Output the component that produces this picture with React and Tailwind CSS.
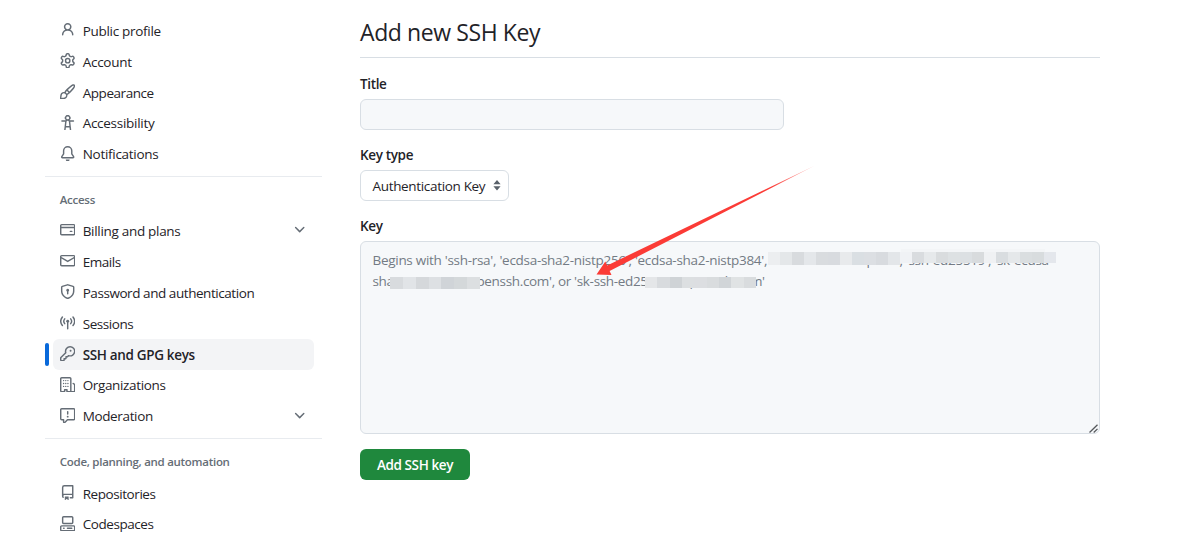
const ICONS = {
  person: 'M10.561 8.073a6.005 6.005 0 0 1 3.432 5.142.75.75 0 1 1-1.498.07 4.5 4.5 0 0 0-8.99 0 .75.75 0 0 1-1.498-.07 6.004 6.004 0 0 1 3.431-5.142 3.999 3.999 0 1 1 5.123 0ZM10.5 5a2.5 2.5 0 1 0-5 0 2.5 2.5 0 0 0 5 0Z',
  gear: 'M8 0a8.2 8.2 0 0 1 .701.031C9.444.095 9.99.645 10.16 1.29l.288 1.107c.018.066.079.158.212.224.231.114.454.243.668.386.123.082.233.09.299.071l1.103-.303c.644-.176 1.392.021 1.82.63.27.385.506.792.704 1.218.315.675.111 1.422-.364 1.891l-.814.806c-.049.048-.098.147-.088.294.016.257.016.515 0 .772-.01.147.038.246.088.294l.814.806c.475.469.679 1.216.364 1.891a7.977 7.977 0 0 1-.704 1.217c-.428.61-1.176.807-1.82.63l-1.102-.302c-.067-.019-.177-.011-.3.071a5.909 5.909 0 0 1-.668.386c-.133.066-.194.158-.211.224l-.29 1.106c-.168.646-.715 1.196-1.458 1.26a8.006 8.006 0 0 1-1.402 0c-.743-.064-1.289-.614-1.458-1.26l-.289-1.106c-.018-.066-.079-.158-.212-.224a5.738 5.738 0 0 1-.668-.386c-.123-.082-.233-.09-.299-.071l-1.103.303c-.644.176-1.392-.021-1.82-.63a8.12 8.12 0 0 1-.704-1.218c-.315-.675-.111-1.422.363-1.891l.815-.806c.05-.048.098-.147.088-.294a6.214 6.214 0 0 1 0-.772c.01-.147-.038-.246-.088-.294l-.815-.806C.635 6.045.431 5.298.746 4.623a7.92 7.92 0 0 1 .704-1.217c.428-.61 1.176-.807 1.82-.63l1.102.302c.067.019.177.011.3-.071.214-.143.437-.272.668-.386.133-.066.194-.158.211-.224l.29-1.106C6.009.645 6.556.095 7.299.03 7.53.01 7.764 0 8 0Zm-.571 1.525c-.036.003-.108.036-.137.146l-.289 1.105c-.147.561-.549.967-.998 1.189-.173.086-.34.183-.5.29-.417.278-.97.423-1.529.27l-1.103-.303c-.109-.03-.175.016-.195.045-.22.312-.412.644-.573.99-.014.031-.021.11.059.19l.815.806c.411.406.562.957.53 1.456a4.709 4.709 0 0 0 0 .582c.032.499-.119 1.05-.53 1.456l-.815.806c-.081.08-.073.159-.059.19.162.346.353.677.573.989.02.03.085.076.195.046l1.102-.303c.56-.153 1.113-.008 1.53.27.161.107.328.204.501.29.447.222.85.629.997 1.189l.289 1.105c.029.109.101.143.137.146a6.6 6.6 0 0 0 1.142 0c.036-.003.108-.036.137-.146l.289-1.105c.147-.561.549-.967.998-1.189.173-.086.34-.183.5-.29.417-.278.97-.423 1.529-.27l1.103.303c.109.029.175-.016.195-.045.22-.313.411-.644.573-.99.014-.031.021-.11-.059-.19l-.815-.806c-.411-.406-.562-.957-.53-1.456a4.709 4.709 0 0 0 0-.582c-.032-.499.119-1.05.53-1.456l.815-.806c.081-.08.073-.159.059-.19a6.464 6.464 0 0 0-.573-.989c-.02-.03-.085-.076-.195-.046l-1.102.303c-.56.153-1.113.008-1.53-.27a4.44 4.44 0 0 0-.501-.29c-.447-.222-.85-.629-.997-1.189l-.289-1.105c-.029-.11-.101-.143-.137-.146a6.6 6.6 0 0 0-1.142 0ZM11 8a3 3 0 1 1-6 0 3 3 0 0 1 6 0ZM9.5 8a1.5 1.5 0 1 0-3.001.001A1.5 1.5 0 0 0 9.5 8Z',
  paintbrush: 'M11.134 1.535c.7-.509 1.416-.942 2.076-1.155.649-.21 1.463-.267 2.069.34.603.601.568 1.411.368 2.07-.202.668-.624 1.39-1.125 2.096-1.011 1.424-2.496 2.987-3.775 4.249-1.098 1.084-2.132 1.839-3.04 2.3a3.744 3.744 0 0 1-1.055 3.217c-.431.431-1.065.691-1.657.861-.614.177-1.294.287-1.914.357A21.151 21.151 0 0 1 .797 16H.743a.75.75 0 0 1-.743-.742v-.054a21.25 21.25 0 0 1 .13-2.284c.067-.647.187-1.287.358-1.914.17-.591.43-1.226.86-1.657a3.746 3.746 0 0 1 3.227-1.054c.466-.893 1.225-1.907 2.314-2.982 1.271-1.255 2.833-2.75 4.245-3.777ZM1.62 13.089c-.051.464-.086.929-.104 1.395.466-.018.932-.053 1.396-.104a10.511 10.511 0 0 0 1.668-.309c.526-.151.856-.325 1.011-.48a2.25 2.25 0 1 0-3.182-3.182c-.155.155-.329.485-.48 1.01a10.515 10.515 0 0 0-.309 1.67Zm10.396-10.34c-1.224.89-2.605 2.189-3.822 3.384l1.718 1.718c1.21-1.205 2.51-2.597 3.387-3.833.47-.662.78-1.227.912-1.662.134-.444.032-.551.009-.575h-.001V1.78c-.014-.014-.113-.113-.548.027-.432.14-.995.462-1.655.942Zm-4.832 7.266-.001.001a9.859 9.859 0 0 0 1.63-1.142L7.155 7.216a9.7 9.7 0 0 0-1.161 1.607c.482.302.889.71 1.19 1.192Z',
  accessibility: 'M9.923 5.302c.063.063.122.129.178.198H14A.75.75 0 0 1 14 7h-3.3l.578 5.163.362 2.997a.75.75 0 0 1-1.49.18L9.868 13H6.132l-.282 2.34a.75.75 0 0 1-1.49-.18l.362-2.997L5.3 7H2a.75.75 0 0 1 0-1.5h3.9a2.54 2.54 0 0 1 .176-.198 3 3 0 1 1 3.847 0ZM9.2 7.073h-.001a1.206 1.206 0 0 0-2.398 0L6.305 11.5h3.39ZM9.5 3a1.5 1.5 0 1 0-3.001.001A1.5 1.5 0 0 0 9.5 3Z',
  bell: 'M8 16a2 2 0 0 0 1.985-1.75c.017-.137-.097-.25-.235-.25h-3.5c-.138 0-.252.113-.235.25A2 2 0 0 0 8 16ZM3 5a5 5 0 0 1 10 0v2.947c0 .05.015.098.042.139l1.703 2.555A1.519 1.519 0 0 1 13.482 13H2.518a1.516 1.516 0 0 1-1.263-2.36l1.703-2.554A.255.255 0 0 0 3 7.947Zm5-3.5A3.5 3.5 0 0 0 4.5 5v2.947c0 .346-.102.683-.294.97l-1.703 2.556a.017.017 0 0 0-.003.01l.001.006c0 .002.002.004.004.006l.006.004.007.001h10.964l.007-.001.006-.004.004-.006.001-.007a.017.017 0 0 0-.003-.01l-1.703-2.554a1.745 1.745 0 0 1-.294-.97V5A3.5 3.5 0 0 0 8 1.5Z',
  card: 'M10.75 9a.75.75 0 0 0 0 1.5h1.5a.75.75 0 0 0 0-1.5h-1.5ZM0 3.75C0 2.784.784 2 1.75 2h12.5c.966 0 1.75.784 1.75 1.75v8.5A1.75 1.75 0 0 1 14.25 14H1.75A1.75 1.75 0 0 1 0 12.25ZM14.5 6.5h-13v5.75c0 .138.112.25.25.25h12.5a.25.25 0 0 0 .25-.25Zm0-2.75a.25.25 0 0 0-.25-.25H1.75a.25.25 0 0 0-.25.25V5h13Z',
  mail: 'M1.75 2h12.5c.966 0 1.75.784 1.75 1.75v8.5A1.75 1.75 0 0 1 14.25 14H1.75A1.75 1.75 0 0 1 0 12.25v-8.5C0 2.784.784 2 1.75 2ZM1.5 12.251c0 .138.112.25.25.25h12.5a.25.25 0 0 0 .25-.25V5.809L8.38 9.397a.75.75 0 0 1-.76 0L1.5 5.809v6.442Zm13-8.181v-.32a.25.25 0 0 0-.25-.25H1.75a.25.25 0 0 0-.25.25v.32L8 7.88Z',
  shield: 'm8.533.133 5.25 1.68A1.75 1.75 0 0 1 15 3.48V7c0 1.566-.32 3.182-1.303 4.682-.983 1.498-2.585 2.813-5.032 3.855a1.697 1.697 0 0 1-1.33 0c-2.447-1.042-4.049-2.357-5.032-3.855C1.32 10.182 1 8.566 1 7V3.48a1.75 1.75 0 0 1 1.217-1.667l5.25-1.68a1.748 1.748 0 0 1 1.066 0Zm-.61 1.429.001.001-5.25 1.68a.251.251 0 0 0-.174.237V7c0 1.36.275 2.666 1.057 3.859.784 1.194 2.121 2.342 4.366 3.298a.196.196 0 0 0 .154 0c2.245-.957 3.582-2.103 4.366-3.297C13.225 9.666 13.5 8.358 13.5 7V3.48a.25.25 0 0 0-.174-.238l-5.25-1.68a.25.25 0 0 0-.153 0ZM9.5 6.5c0 .536-.286 1.032-.75 1.3v2.45a.75.75 0 0 1-1.5 0V7.8A1.5 1.5 0 1 1 9.5 6.5Z',
  key: 'M10.5 0a5.499 5.499 0 1 1-1.288 10.848l-.932.932a.749.749 0 0 1-.53.22H7v.75a.749.749 0 0 1-.22.53l-.5.5a.749.749 0 0 1-.53.22H5v.75a.749.749 0 0 1-.22.53l-.5.5a.749.749 0 0 1-.53.22h-2A1.75 1.75 0 0 1 0 14.25v-2c0-.199.079-.389.22-.53l4.932-4.932A5.5 5.5 0 0 1 10.5 0Zm-4 5.5c-.001.431.069.86.205 1.269a.75.75 0 0 1-.181.768L1.5 12.56v1.69c0 .138.112.25.25.25h1.69l.06-.06v-1.19a.75.75 0 0 1 .75-.75h1.19l.06-.06v-1.19a.75.75 0 0 1 .75-.75h1.19l1.023-1.025a.75.75 0 0 1 .768-.18A4 4 0 1 0 6.5 5.5ZM11 6a1 1 0 1 1 0-2 1 1 0 0 1 0 2Z',
  organization: 'M1.75 16A1.75 1.75 0 0 1 0 14.25V1.75C0 .784.784 0 1.75 0h8.5C11.216 0 12 .784 12 1.75v12.5c0 .085-.006.168-.018.25h2.268a.25.25 0 0 0 .25-.25V8.285a.25.25 0 0 0-.111-.208l-1.055-.703a.749.749 0 1 1 .832-1.248l1.055.703c.487.325.779.871.779 1.456v5.965A1.75 1.75 0 0 1 14.25 16h-3.5a.766.766 0 0 1-.197-.026c-.099.017-.2.026-.303.026h-3a.75.75 0 0 1-.75-.75V14h-1v1.25a.75.75 0 0 1-.75.75Zm-.25-1.75c0 .138.112.25.25.25H4v-1.25a.75.75 0 0 1 .75-.75h2.5a.75.75 0 0 1 .75.75v1.25h2.25a.25.25 0 0 0 .25-.25V1.75a.25.25 0 0 0-.25-.25h-8.5a.25.25 0 0 0-.25.25ZM3.75 3a.75.75 0 1 0 0 1.5.75.75 0 0 0 0-1.5Zm0 3a.75.75 0 1 0 0 1.5.75.75 0 0 0 0-1.5Zm0 3a.75.75 0 1 0 0 1.5.75.75 0 0 0 0-1.5ZM6 3a.75.75 0 1 0 0 1.5A.75.75 0 0 0 6 3Zm0 3a.75.75 0 1 0 0 1.5A.75.75 0 0 0 6 6Zm0 3a.75.75 0 1 0 0 1.5A.75.75 0 0 0 6 9Zm2.25-6a.75.75 0 1 0 0 1.5.75.75 0 0 0 0-1.5Zm0 3a.75.75 0 1 0 0 1.5.75.75 0 0 0 0-1.5Zm0 3a.75.75 0 1 0 0 1.5.75.75 0 0 0 0-1.5Z',
  report: 'M0 1.75C0 .784.784 0 1.75 0h12.5C15.216 0 16 .784 16 1.75v9.5A1.75 1.75 0 0 1 14.25 13H8.06l-2.573 2.573A1.458 1.458 0 0 1 3 14.543V13H1.75A1.75 1.75 0 0 1 0 11.25Zm1.75-.25a.25.25 0 0 0-.25.25v9.5c0 .138.112.25.25.25h2a.75.75 0 0 1 .75.75v2.19l2.72-2.72a.749.749 0 0 1 .53-.22h6.5a.25.25 0 0 0 .25-.25v-9.5a.25.25 0 0 0-.25-.25Zm7 2.25v2.5a.75.75 0 0 1-1.5 0v-2.5a.75.75 0 0 1 1.5 0ZM9 9a1 1 0 1 1-2 0 1 1 0 0 1 2 0Z',
  repo: 'M2 2.5A2.5 2.5 0 0 1 4.5 0h8.75a.75.75 0 0 1 .75.75v12.5a.75.75 0 0 1-.75.75h-2.5a.75.75 0 0 1 0-1.5h1.75v-2h-8a1 1 0 0 0-.714 1.7.75.75 0 1 1-1.072 1.05A2.495 2.495 0 0 1 2 11.5Zm10.5-1h-8a1 1 0 0 0-1 1v6.708A2.486 2.486 0 0 1 4.5 9h8ZM5 12.25a.25.25 0 0 1 .25-.25h3.5a.25.25 0 0 1 .25.25v3.25a.25.25 0 0 1-.4.2l-1.45-1.087a.249.249 0 0 0-.3 0L5.4 15.7a.25.25 0 0 1-.4-.2Z',
  codespaces: 'M0 11.25c0-.966.784-1.75 1.75-1.75h12.5c.966 0 1.75.784 1.75 1.75v3A1.75 1.75 0 0 1 14.25 16H1.75A1.75 1.75 0 0 1 0 14.25Zm2-9.5C2 .784 2.784 0 3.75 0h8.5C13.216 0 14 .784 14 1.75v5a1.75 1.75 0 0 1-1.75 1.75h-8.5A1.75 1.75 0 0 1 2 6.75Zm1.75-.25a.25.25 0 0 0-.25.25v5c0 .138.112.25.25.25h8.5a.25.25 0 0 0 .25-.25v-5a.25.25 0 0 0-.25-.25Zm-2 9.5a.25.25 0 0 0-.25.25v3c0 .138.112.25.25.25h12.5a.25.25 0 0 0 .25-.25v-3a.25.25 0 0 0-.25-.25ZM7 12.75a.75.75 0 0 1 .75-.75h4.5a.75.75 0 0 1 0 1.5h-4.5a.75.75 0 0 1-.75-.75Zm-4 0a.75.75 0 0 1 .75-.75h.5a.75.75 0 0 1 0 1.5h-.5a.75.75 0 0 1-.75-.75Z',
  chevron: 'M12.78 5.22a.749.749 0 0 1 0 1.06l-4.25 4.25a.749.749 0 0 1-1.06 0L3.22 6.28a.749.749 0 1 1 1.06-1.06L8 8.939l3.72-3.719a.749.749 0 0 1 1.06 0Z',
};

function Icon({ name }) {
  if (name === 'broadcast') {
    return (
      <svg viewBox="0 0 16 16" className="size-[15.4px] shrink-0" fill="none" stroke="#656d76" strokeWidth="1.5" strokeLinecap="round">
        <path d="M2.5 2.1a7 7 0 0 0 0 8.8M13.5 2.1a7 7 0 0 1 0 8.8M4.9 4a4 4 0 0 0 0 5M11.1 4a4 4 0 0 1 0 5M8 7.5v6.7" />
        <circle cx="8" cy="6.5" r="1.5" fill="#656d76" stroke="none" />
      </svg>
    );
  }
  return (
    <svg viewBox="0 0 16 16" className="size-[15.4px] shrink-0" fill="#656d76">
      <path fillRule={name === 'organization' ? 'evenodd' : 'nonzero'} d={ICONS[name]} />
    </svg>
  );
}

function Item({ icon, label, track, expandable, active }) {
  return (
    <li className="relative h-[30.85px] px-[7.7px]">
      {active && <span className="absolute top-[3.8px] left-0 h-[23.2px] w-[4px] rounded-[3px] bg-[#0969da]" />}
      <a className={`flex h-full items-center rounded-[6px] px-[7.3px] ${active ? 'bg-[#f3f4f6] font-semibold' : ''}`}>
        <span className="-mt-[2px] flex">
          <Icon name={icon} />
        </span>
        <span className={`ml-[7.3px] flex-1 whitespace-nowrap ${track}`}>{label}</span>
        {expandable && (
          <span className="-mt-[2px] flex">
            <Icon name="chevron" />
          </span>
        )}
      </a>
    </li>
  );
}

const personal = [
  { icon: 'person', label: 'Public profile', track: 'tracking-[-0.29px]' },
  { icon: 'gear', label: 'Account', track: 'tracking-[-0.26px]' },
  { icon: 'paintbrush', label: 'Appearance', track: 'tracking-[-0.44px]' },
  { icon: 'accessibility', label: 'Accessibility', track: 'tracking-[-0.28px]' },
  { icon: 'bell', label: 'Notifications', track: 'tracking-[-0.29px]' },
];
const access = [
  { icon: 'card', label: 'Billing and plans', track: 'tracking-[-0.3px]', expandable: true },
  { icon: 'mail', label: 'Emails', track: 'tracking-[-0.45px]' },
  { icon: 'shield', label: 'Password and authentication', track: 'tracking-[-0.44px]' },
  { icon: 'broadcast', label: 'Sessions', track: 'tracking-[-0.43px]' },
  { icon: 'key', label: 'SSH and GPG keys', track: 'tracking-[-0.34px]', active: true },
  { icon: 'organization', label: 'Organizations', track: 'tracking-[-0.35px]' },
  { icon: 'report', label: 'Moderation', track: 'tracking-[-0.36px]', expandable: true },
];
const code = [
  { icon: 'repo', label: 'Repositories', track: 'tracking-[-0.43px]' },
  { icon: 'codespaces', label: 'Codespaces', track: 'tracking-[-0.43px]' },
];

function Group({ items }) {
  return (
    <ul>
      {items.map((item) => (
        <Item key={item.label} {...item} />
      ))}
    </ul>
  );
}

function Heading({ children }) {
  return <h3 className="h-[31px] pl-[14.8px] text-[11.5px] leading-[30px] font-semibold tracking-[-0.28px] text-[#656d76]">{children}</h3>;
}

function Mosaic({ className, cells }) {
  return (
    <div className={`absolute flex ${className}`}>
      {cells.map((c, i) => (
        <span key={i} className="h-full flex-1" style={{ backgroundColor: c }} />
      ))}
    </div>
  );
}

export default function App() {
  return (
    <div className="flex h-[540px] w-[1201px] overflow-hidden bg-white font-['Open_Sans','Noto_Sans',sans-serif] text-[13.5px] leading-[20px] text-[#1f2328]">
      <nav className="ml-[45px] w-[277px] shrink-0 pt-[15.5px]">
        <div className="w-full">
          <Group items={personal} />
          <hr className="mt-[6.5px] mb-[7.5px] border-[#d8dee4]/60" />
          <Heading>Access</Heading>
          <Group items={access} />
          <hr className="mt-[6.5px] mb-[8px] border-[#d8dee4]/60" />
          <Heading>Code, planning, and automation</Heading>
          <Group items={code} />
        </div>
      </nav>
      <main className="ml-[38px] w-[740px] shrink-0 pt-[16px]">
        <h1 className="h-[42px] border-b border-[#d8dee4] text-[23px] leading-[33px] tracking-[-0.4px]">Add new SSH Key</h1>
        <div className="mt-[16px] font-semibold tracking-[-0.35px]">Title</div>
        <div className="mt-[5px] h-[31px] w-[424px] rounded-[6px] border border-[#d8dee4] bg-[#f6f8fa]" />
        <div className="mt-[15px] font-semibold tracking-[-0.35px]">Key type</div>
        <div className="mt-[5px] flex h-[31px] w-[149px] items-center justify-between rounded-[6px] border border-[#d8dee4] pr-[7px] pl-[11.5px]">
          <span className="whitespace-nowrap tracking-[-0.33px]">Authentication Key</span>
          <svg viewBox="0 0 8 11" className="h-[11px] w-[8px]" fill="#59616a">
            <path d="M4 0 7.6 4.3H.4ZM.4 6.2h7.2L4 10.5Z" />
          </svg>
        </div>
        <div className="mt-[15px] font-semibold tracking-[-0.35px]">Key</div>
        <div className="relative mt-[5px] h-[193px] rounded-[6px] border border-[#d8dee4] bg-[#f6f8fa] px-[11.5px] pt-[7.5px] leading-[21px] text-[#737b84]">
          <p className="whitespace-nowrap tracking-[-0.29px]">Begins with 'ssh-rsa', 'ecdsa-sha2-nistp256', 'ecdsa-sha2-nistp384', 'ecdsa-sha2-nistp521', 'ssh-ed25519', 'sk-ecdsa-</p>
          <p className="whitespace-nowrap tracking-[-0.33px]">sha2-nistp256@openssh.com', or 'sk-ssh-ed25519@openssh.com'</p>
          <div className="absolute top-[7px] left-[540px] h-[4px] w-[144px] bg-[#f3f5f7]" />
          <Mosaic className="top-[10px] left-[407px] h-[13px] w-[132px]" cells={['#eceef0', '#e4e7e9', '#d8dbde', '#e4e7ea', '#d9dcdf', '#d8dbdf', '#e8eaec', '#dadfe3', '#dcdfe3', '#d8dbdf', '#e3e6e9']} />
          <Mosaic className="top-[10px] left-[539px] h-[11px] w-[156px]" cells={['#f0f2f5', '#d9dcdf', '#e6e9eb', '#d9dcde', '#dde1e3', '#dce0e3', '#d8dbdd', '#eff1f3', '#d9dde0', '#e5e8ea', '#dadee0', '#d8dcde', '#e4e7ec']} />
          <Mosaic className="top-[35px] left-[29px] h-[12px] w-[90px]" cells={['#d8dbde', '#e1e4e7', '#d5d8db', '#dde0e3', '#d0d4d8', '#d4d8da', '#dcdfe1']} />
          <Mosaic className="top-[35px] left-[284px] h-[11px] w-[111px]" cells={['#e4e6e8', '#d8dbde', '#cfd3d6', '#dcdfe1', '#dcdee1', '#d9dcde', '#d1d5d8', '#e0e3e4', '#d9dcde']} />
          <svg viewBox="0 0 9 9" className="absolute right-[1px] bottom-0 size-[9px]" stroke="#55585c" strokeWidth="1.3">
            <path d="M.5 8.5 8.5.8M4.7 8.5l3.8-3.6" />
          </svg>
          <svg viewBox="0 0 220 112" className="absolute top-[-77px] left-[235px] h-[112px] w-[220px]">
            <defs>
              <linearGradient id="tail" x1="0" x2="1" y1="0" y2="0">
                <stop offset="0.8" stopColor="#fb3b36" />
                <stop offset="1" stopColor="#fb3b36" stopOpacity="0.3" />
              </linearGradient>
            </defs>
            <path fill="url(#tail)" d="M.5 109.5 9.3 96.5l1.9 3.9L218.5.8 13.6 106l1.9 4Z" />
          </svg>
        </div>
        <button className="mt-[15px] h-[31px] w-[110px] rounded-[6px] bg-[#1f883d] font-semibold whitespace-nowrap tracking-[-0.4px] text-white">Add SSH key</button>
      </main>
    </div>
  );
}
